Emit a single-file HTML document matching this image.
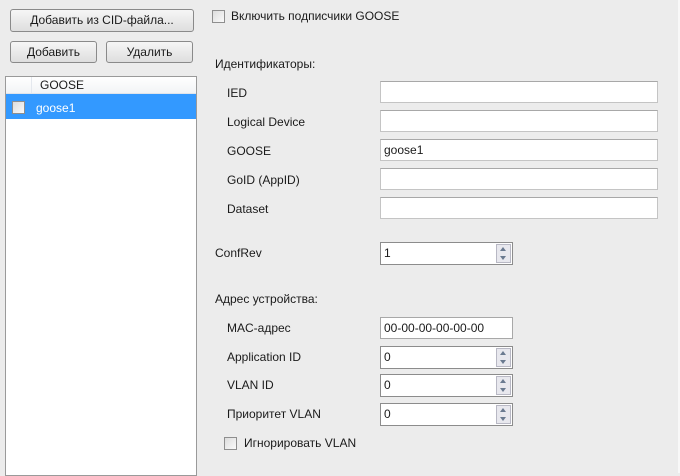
<!DOCTYPE html>
<html><head><meta charset="utf-8"><style>
body{margin:0;width:680px;height:473px;background:#ececec;font-family:"Liberation Sans",sans-serif;font-size:12px;color:#1a1a1a;position:relative;overflow:hidden}
.a{position:absolute}
.btn{position:absolute;border:1px solid #8a8a8a;border-radius:3px;background:linear-gradient(#f6f6f6,#dedede);text-align:center;line-height:20px;box-sizing:border-box;height:22px}
.tb{position:absolute;background:#fff;border:1px solid #c4c4c4;border-top-color:#a8a8a8;box-sizing:border-box;height:22px;line-height:20px;padding-left:3px}
.num{position:absolute;background:#fff;border:1px solid #8c8c8c;box-sizing:border-box;height:23px;line-height:21px;padding-left:3px}
.sp{position:absolute;right:1px;top:1px;width:15px;height:19px;background:#e8e8ee;border:1px solid #b8b8c4;box-sizing:border-box}
.sp:before{content:"";position:absolute;left:3px;top:2px;border:3px solid transparent;border-bottom:4px solid #6a7a90;border-top:0}
.sp:after{content:"";position:absolute;left:3px;top:11px;border:3px solid transparent;border-top:4px solid #6a7a90;border-bottom:0}
.cb{position:absolute;width:11px;height:11px;border:1px solid #8e8e8e;background:linear-gradient(135deg,#dcdcdc,#fafafa)}
</style></head><body>
<div class="a" style="right:0;top:0;width:2px;height:473px;background:#f8f8f8"></div>
<div class="btn" style="left:10px;top:9px;width:184px;height:23px">Добавить из CID-файла...</div>
<div class="btn" style="left:10px;top:41px;width:87px">Добавить</div>
<div class="btn" style="left:106px;top:41px;width:87px">Удалить</div>
<div class="a" style="left:5px;top:76px;width:192px;height:400px;background:#fff;border:1px solid #9a9a9a;box-sizing:border-box"></div>
<div class="a" style="left:6px;top:77px;width:190px;height:16px;background:linear-gradient(#fff,#f2f4f6);border-bottom:1px solid #e0e4ea"></div>
<div class="a" style="left:31px;top:77px;width:1px;height:16px;background:#e4e8ee"></div>
<div class="a" style="left:40px;top:78px">GOOSE</div>
<div class="a" style="left:6px;top:94px;width:190px;height:25px;background:#3399ff"></div>
<div class="cb" style="left:12px;top:101px"></div>
<div class="a" style="left:36px;top:101px;color:#fff">goose1</div>
<div class="cb" style="left:212px;top:10px"></div>
<div class="a" style="left:231px;top:9px">Включить подписчики GOOSE</div>
<div class="a" style="left:215px;top:57px">Идентификаторы:</div>
<div class="a" style="left:227px;top:86px">IED</div>
<div class="a" style="left:227px;top:115px">Logical Device</div>
<div class="a" style="left:227px;top:144px">GOOSE</div>
<div class="a" style="left:227px;top:173px">GoID (AppID)</div>
<div class="a" style="left:227px;top:202px">Dataset</div>
<div class="tb" style="left:380px;top:81px;width:278px"></div>
<div class="tb" style="left:380px;top:110px;width:278px"></div>
<div class="tb" style="left:380px;top:139px;width:278px">goose1</div>
<div class="tb" style="left:380px;top:168px;width:278px"></div>
<div class="tb" style="left:380px;top:197px;width:278px"></div>
<div class="a" style="left:215px;top:246px">ConfRev</div>
<div class="num" style="left:380px;top:242px;width:133px">1<div class="sp"></div></div>
<div class="a" style="left:215px;top:292px">Адрес устройства:</div>
<div class="a" style="left:227px;top:321px">MAC-адрес</div>
<div class="a" style="left:227px;top:350px">Application ID</div>
<div class="a" style="left:227px;top:378px">VLAN ID</div>
<div class="a" style="left:227px;top:407px">Приоритет VLAN</div>
<div class="tb" style="left:380px;top:317px;width:133px;border-color:#a8a8a8">00-00-00-00-00-00</div>
<div class="num" style="left:380px;top:346px;width:133px">0<div class="sp"></div></div>
<div class="num" style="left:380px;top:374px;width:133px">0<div class="sp"></div></div>
<div class="num" style="left:380px;top:403px;width:133px">0<div class="sp"></div></div>
<div class="cb" style="left:224px;top:437px"></div>
<div class="a" style="left:244px;top:436px">Игнорировать VLAN</div>
</body></html>
